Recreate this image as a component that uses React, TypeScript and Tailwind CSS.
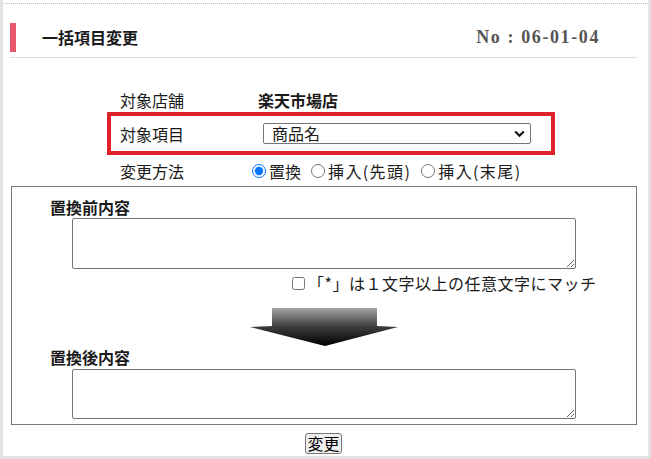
import React from "react";

const Arrow = () => (
  <svg width="148" height="38" viewBox="0 0 148 38" className="block">
    <defs>
      <linearGradient id="arw" x1="0" y1="0" x2="0" y2="1">
        <stop offset="0" stopColor="#a6a6a6" />
        <stop offset="0.5" stopColor="#3c3c3c" />
        <stop offset="1" stopColor="#000000" />
      </linearGradient>
    </defs>
    <path d="M22 0H127V18L148 19L75 38L0 19L22 18Z" fill="url(#arw)" />
  </svg>
);

const Radio = ({ label, checked = false, wide = false }: { label: string; checked?: boolean; wide?: boolean }) => (
  <label className="flex items-center">
    <input type="radio" name="method" defaultChecked={checked} className="m-0 mr-[3px] w-[14px] h-[14px]" />
    <span className={wide ? "tracking-[1.4px]" : ""}>{label}</span>
  </label>
);

export default function App() {
  return (
    <div className="w-[651px] h-[459px] bg-white font-['Noto_Sans_CJK_JP','Noto_Sans',sans-serif] text-[16px] text-[#1a1a1a] border-x-[3px] border-b-[3px] border-[#e2e2e2] pt-[3px]">
      <div className="border-t border-dotted border-[#bdbdbd]">
        <header className="ml-[7px] w-[627px] pt-[19px] pb-[5px] border-b border-[#dedede] flex items-center">
          <div className="w-[6px] h-[29px] bg-[#e8566b]" />
          <h1 className="ml-[26px] font-bold text-[16px] leading-[29px]">一括項目変更</h1>
          <div className="ml-auto mr-[37px] font-['Liberation_Serif',serif] font-bold text-[18px] tracking-[1.6px] text-[#555]">
            No : 06-01-04
          </div>
        </header>

        <div className="ml-[104px] w-[448px] pt-[29px]">
          <div className="h-[25px] flex items-center pl-[13px]">
            <span className="w-[138px]">対象店舗</span>
            <span className="font-bold">楽天市場店</span>
          </div>
          <div className="h-[43px] border-4 border-[#e0202a] flex items-center pl-[9px]">
            <span className="w-[138px]">対象項目</span>
            <div className="ml-[5px] w-[268px] h-[21px] border border-[#767676] rounded-[2px] flex items-center justify-between pl-[8px] pr-[5px] leading-[19px]">
              <span>商品名</span>
              <svg width="11" height="8" viewBox="0 0 11 8">
                <path d="M1.2 1.5L5.5 5.8L9.8 1.5" fill="none" stroke="#111" strokeWidth="2" />
              </svg>
            </div>
          </div>
          <div className="h-[31px] flex items-center pl-[13px]">
            <span className="w-[132px]">変更方法</span>
            <div className="flex items-center gap-[10px]">
              <Radio label="置換" checked />
              <Radio label="挿入(先頭)" wide />
              <Radio label="挿入(末尾)" wide />
            </div>
          </div>
        </div>

        <div className="ml-[8px] w-[626px] border border-[#777] pb-[5px]">
          <div className="pl-[38px] pt-[9px] leading-[22px] font-bold">置換前内容</div>
          <textarea className="block ml-[60px] w-[504px] h-[51px] border border-[#767676] rounded-[2px]" />
          <label className="flex items-center ml-[280px] mt-[2px] h-[24px]">
            <input type="checkbox" className="m-0 w-[13px] h-[13px]" />
            <span className="ml-[3px] tracking-[0.5px]">「*」は１文字以上の任意文字にマッチ</span>
          </label>
          <div className="mt-[13px] ml-[238px]">
            <Arrow />
          </div>
          <div className="pl-[38px] leading-[23px] font-bold">置換後内容</div>
          <textarea className="block ml-[60px] w-[504px] h-[50px] border border-[#767676] rounded-[2px]" />
        </div>

        <div className="mt-[6px] ml-[302px]">
          <button className="h-[21px] w-[37px] bg-[#efefef] border border-[#767676] rounded-[3px] text-[16px] leading-[19px] text-black">
            変更
          </button>
        </div>
      </div>
    </div>
  );
}
